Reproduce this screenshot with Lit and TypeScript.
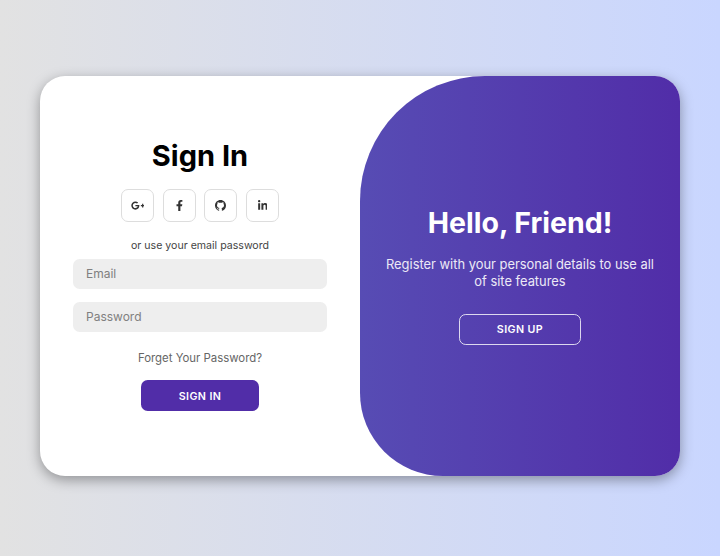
import { LitElement, html, css } from "lit";
import { customElement } from "lit/decorators.js";

@customElement("app-root")
export class AppRoot extends LitElement {
  static styles = css`
    :host {
      display: flex;
      align-items: flex-start;
      justify-content: center;
      min-height: 556px;
      padding-top: 76px;
      box-sizing: border-box;
      background: linear-gradient(to right, #e2e2e2, #c9d6ff);
      font-family: "Inter", "Noto Sans", sans-serif;
    }
    .card {
      width: 640px;
      height: 400px;
      background: #fff;
      border-radius: 25px;
      box-shadow: 0 4px 12.5px rgba(0, 0, 0, 0.35);
      display: grid;
      grid-template-columns: 1fr 1fr;
      overflow: hidden;
    }
    .form {
      display: flex;
      flex-direction: column;
      align-items: center;
      padding: 63px 33px 0;
    }
    h1 {
      margin: 0;
      font-size: 29px;
      line-height: 34px;
      font-weight: 700;
      color: #000;
    }
    .social {
      display: flex;
      gap: 8.67px;
      margin-top: 16px;
    }
    .social a {
      box-sizing: border-box;
      width: 33px;
      height: 33px;
      border: 1px solid #ddd;
      border-radius: 7px;
      display: flex;
      align-items: center;
      justify-content: center;
      color: #333;
    }
    .social svg {
      height: 11px;
      fill: currentColor;
      display: block;
    }
    .hint {
      margin-top: 17px;
      font-size: 10.6px;
      line-height: 14px;
      color: #444;
    }
    input {
      box-sizing: border-box;
      display: block;
      width: 100%;
      height: 30px;
      border: none;
      outline: none;
      border-radius: 6.7px;
      background: #eee;
      padding: 0 13px 2px;
      font: 400 12px "Inter", sans-serif;
      color: #333;
    }
    input::placeholder {
      color: #808080;
    }
    .first {
      margin-top: 6px;
    }
    .second {
      margin-top: 13px;
    }
    .forgot {
      margin-top: 19px;
      font-size: 11.4px;
      line-height: 15px;
      color: #666;
    }
    .btn {
      box-sizing: border-box;
      border-radius: 6.7px;
      font: 600 10.7px "Inter", sans-serif;
      letter-spacing: 0.4px;
      color: #fff;
      display: flex;
      align-items: center;
      justify-content: center;
      text-transform: uppercase;
    }
    .signin {
      margin-top: 14px;
      width: 118px;
      height: 31px;
      padding-top: 2px;
      background: #512da8;
      border: 1px solid transparent;
    }
    .panel {
      background: linear-gradient(to right, #574cb4, #512da8);
      border-radius: 125px 0 0 83px;
      color: #fff;
      display: flex;
      flex-direction: column;
      align-items: center;
      padding: 129px 20px 0;
      text-align: center;
    }
    h2 {
      margin: 0;
      font-size: 28.5px;
      line-height: 36px;
      font-weight: 700;
    }
    .panel p {
      margin: 15px 0 0;
      font-size: 12.9px;
      line-height: 17px;
      color: #ece9f6;
    }
    .signup {
      margin-top: 24px;
      width: 122px;
      height: 31px;
      background: transparent;
      border: 1px solid rgba(255, 255, 255, 0.8);
    }
  `;

  render() {
    return html`
      <div class="card">
        <div class="form">
          <h1>Sign In</h1>
          <div class="social">
            <a><svg viewBox="0 0 640 512"><path d="M386.061 228.496c1.834 9.692 3.143 19.384 3.143 31.956C389.204 370.205 315.599 448 204.8 448c-106.084 0-192-85.915-192-192s85.916-192 192-192c51.864 0 95.083 18.859 128.611 50.292l-52.126 50.03c-14.145-13.621-39.028-29.599-76.485-29.599-65.484 0-118.92 54.221-118.92 121.277 0 67.056 53.436 121.277 118.92 121.277 75.961 0 104.513-54.745 108.965-82.773H204.8v-66.009h181.261zm185.406 6.437V179.2h-56.001v55.733h-55.733v56.001h55.733v55.733h56.001v-55.733H627.2v-56.001h-55.733z"/></svg></a>
            <a><svg viewBox="0 0 320 512"><path d="M279.14 288l14.22-92.66h-88.91v-60.13c0-25.35 12.42-50.06 52.24-50.06h40.42V6.26S260.43 0 225.36 0c-73.22 0-121.08 44.38-121.08 124.72v70.62H22.89V288h81.39v224h100.17V288z"/></svg></a>
            <a><svg viewBox="0 0 16 16"><path d="M8 0C3.58 0 0 3.58 0 8c0 3.54 2.29 6.53 5.47 7.59.4.07.55-.17.55-.38 0-.19-.01-.82-.01-1.49-2.01.37-2.53-.49-2.69-.94-.09-.23-.48-.94-.82-1.13-.28-.15-.68-.52-.01-.53.63-.01 1.08.58 1.23.82.72 1.21 1.87.87 2.33.66.07-.52.28-.87.51-1.07-1.78-.2-3.64-.89-3.64-3.95 0-.87.31-1.59.82-2.15-.08-.2-.36-1.02.08-2.12 0 0 .67-.21 2.2.82.64-.18 1.32-.27 2-.27.68 0 1.36.09 2 .27 1.53-1.04 2.2-.82 2.2-.82.44 1.1.16 1.92.08 2.12.51.56.82 1.27.82 2.15 0 3.07-1.87 3.75-3.65 3.95.29.25.54.73.54 1.48 0 1.07-.01 1.93-.01 2.2 0 .21.15.46.55.38A8.013 8.013 0 0016 8c0-4.42-3.58-8-8-8z"/></svg></a>
            <a><svg viewBox="0 0 448 512"><path d="M100.28 448H7.4V148.9h92.88zM53.79 108.1C24.09 108.1 0 83.5 0 53.8a53.79 53.79 0 0 1 107.58 0c0 29.7-24.1 54.3-53.79 54.3zM447.9 448h-92.68V302.4c0-34.7-.7-79.2-48.29-79.2-48.29 0-55.69 37.7-55.69 76.7V448h-92.78V148.9h89.08v40.8h1.3c12.4-23.5 42.69-48.3 87.88-48.3 94 0 111.28 61.9 111.28 142.3V448z"/></svg></a>
          </div>
          <div class="hint">or use your email password</div>
          <input class="first" type="email" placeholder="Email" />
          <input class="second" type="password" placeholder="Password" />
          <div class="forgot">Forget Your Password?</div>
          <div class="btn signin">Sign In</div>
        </div>
        <div class="panel">
          <h2>Hello, Friend!</h2>
          <p>Register with your personal details to use all of site features</p>
          <div class="btn signup">Sign Up</div>
        </div>
      </div>
    `;
  }
}
